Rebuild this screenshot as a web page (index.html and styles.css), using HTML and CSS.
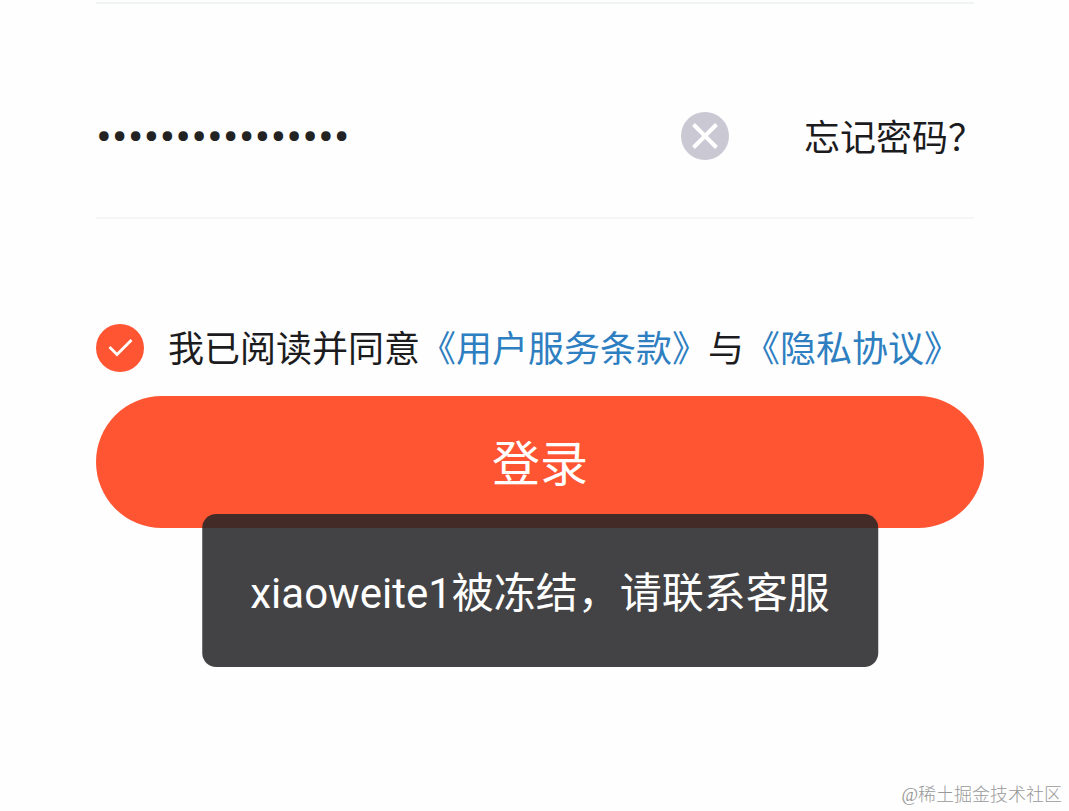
FILE: index.html
```html
<!DOCTYPE html>
<html lang="zh-CN">
<head>
  <meta charset="UTF-8" />
  <meta name="viewport" content="width=device-width, initial-scale=1.0" />
  <title>登录</title>
  <link rel="stylesheet" href="styles.css">
</head>
<body>
  <form class="login">
    <!-- Password row -->
    <div class="field">
      <input class="password" type="password" value="abcdefgh12345678" aria-label="密码" />
      <button class="clear" type="button" aria-label="清除">
        <svg viewBox="0 0 48 48" width="48" height="48">
          <circle cx="24" cy="24" r="24" fill="#c9c8d3" />
          <path d="M12.5 12.5L35.5 35.5M35.5 12.5L12.5 35.5" stroke="#fff" stroke-width="4" fill="none" />
        </svg>
      </button>
      <a class="forgot" href="#">忘记密码？</a>
    </div>

    <!-- Agreement -->
    <div class="agreement">
      <span class="check">
        <input type="checkbox" id="agree" checked />
        <svg viewBox="0 0 48 48" width="48" height="48">
          <path d="M13.5 23L21 30.5L35.5 16" stroke="#fff" stroke-width="2.8" fill="none" />
        </svg>
      </span>
      <p><label for="agree">我已阅读并同意</label><a href="#">《用户服务条款》</a>与<a href="#">《隐私协议》</a></p>
    </div>

    <div class="actions">
      <button class="submit" type="submit">登录</button>
      <div class="toast" role="alert">xiaoweite1被冻结，请联系客服</div>
    </div>
  </form>

  <div class="watermark">@稀土掘金技术社区</div>
</body>
</html>
```

FILE: styles.css
```css
* { box-sizing: border-box; margin: 0; padding: 0; }

body {
  min-height: 100vh;
  display: flex;
  flex-direction: column;
  justify-content: space-between;
  background: #fefefe;
  color: #1c1c1e;
  font-family: Roboto, "Noto Sans CJK SC", sans-serif;
  font-size: 36px;
  line-height: 48px;
}

button { border: none; background: none; font-family: inherit; cursor: pointer; }
a { color: #2e7fc1; text-decoration: none; }

.login { padding: 2px 85px 0 96px; }

/* Password row */
.field {
  display: flex;
  align-items: center;
  padding: 108px 0 57px;
  margin-right: 10px;
  border-top: 2px solid #eff3f4;
  border-bottom: 2px solid #f5f6f6;
}
.password {
  flex: 1;
  min-width: 0;
  height: 48px;
  border: none;
  outline: none;
  background: none;
  color: #222;
  font-family: Roboto, sans-serif;
  font-size: 47px;
}
.clear { width: 48px; height: 48px; }
.clear svg { display: block; }
.forgot {
  margin: 0 -10px 0 75px;
  padding-top: 6px;
  color: inherit;
  line-height: 42px;
  white-space: nowrap;
}

/* Agreement */
.agreement {
  display: flex;
  align-items: center;
  gap: 24px;
  padding: 105px 0 24px;
}
.agreement p { padding-top: 4px; line-height: 44px; }
.check { position: relative; width: 48px; height: 48px; flex: none; }
.check input {
  display: block;
  appearance: none;
  width: 48px;
  height: 48px;
  border-radius: 50%;
  background: #ddd;
}
.check input:checked { background: #ff5533; }
.check svg { position: absolute; top: 0; left: 0; pointer-events: none; }

/* Submit + toast */
.actions { position: relative; }
.submit {
  display: block;
  width: 100%;
  height: 132px;
  padding-bottom: 4px;
  border-radius: 66px;
  background: #ff5533;
  color: #fff;
  font-size: 48px;
}
.toast {
  position: absolute;
  top: 118px;
  left: 50%;
  transform: translateX(-50%);
  padding: 56px 48px 49px;
  border-radius: 14px;
  background: rgba(36, 36, 38, 0.86);
  color: #fff;
  font-size: 42px;
  white-space: nowrap;
}

.watermark {
  align-self: flex-end;
  padding: 0 7px 4px;
  color: #999;
  font-family: "Liberation Serif", "Noto Sans CJK SC", serif;
  font-size: 18px;
  font-weight: 300;
  line-height: 24px;
}
```
